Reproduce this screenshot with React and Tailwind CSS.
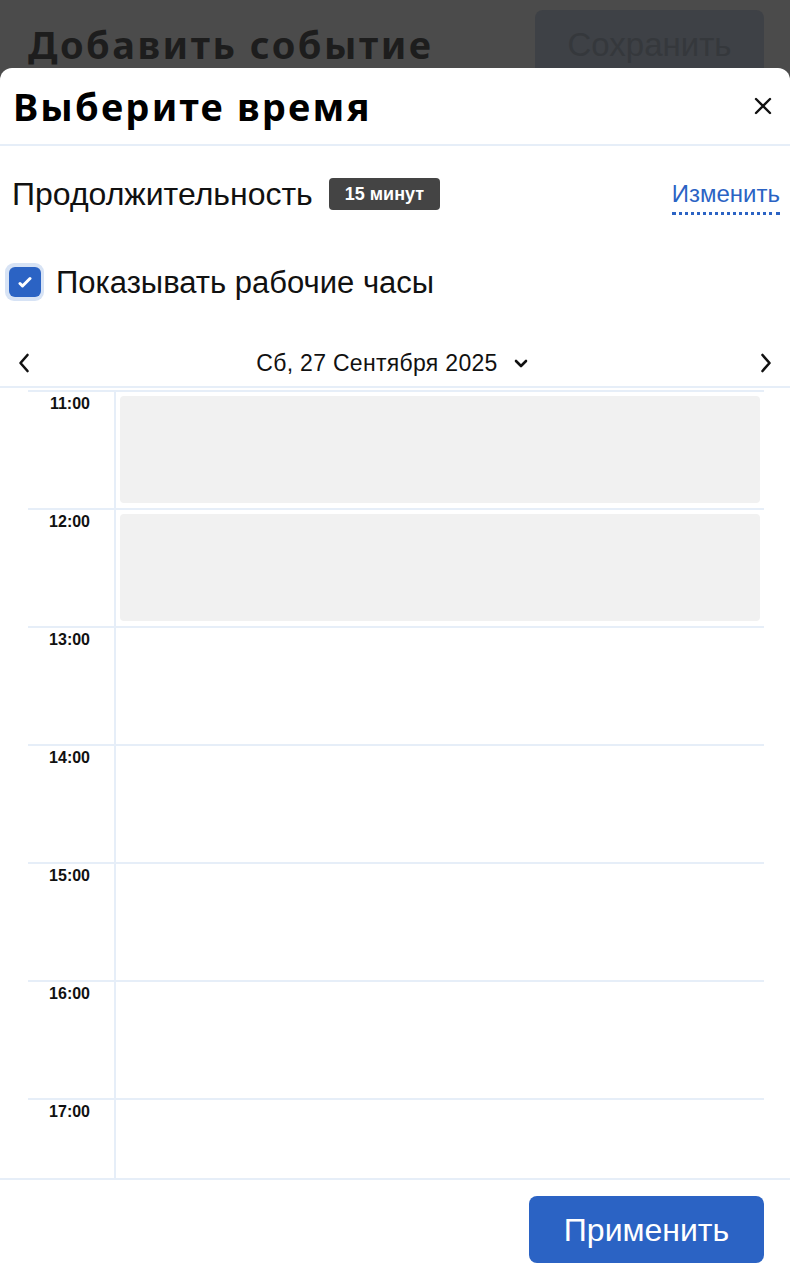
import React from 'react';

const hours = [
  { label: '11:00', busy: true },
  { label: '12:00', busy: true },
  { label: '13:00', busy: false },
  { label: '14:00', busy: false },
  { label: '15:00', busy: false },
  { label: '16:00', busy: false },
  { label: '17:00', busy: false },
];

const sans = "font-['Liberation_Sans',Arial,sans-serif]";

const App = () => {
  return (
    <div className={`relative h-[1272px] w-[790px] overflow-hidden bg-[#4b4b4b] ${sans}`}>
      {/* page behind the overlay */}
      <div className="flex items-start justify-between pl-[28px] pr-[26px] pt-[10px]">
        <h1 className="pt-[12px] font-['Noto_Sans',sans-serif] text-[38px] font-bold leading-[44px] tracking-[2.5px] text-[#1d1d1d]">
          Добавить событие
        </h1>
        <button className="h-[70px] w-[229px] rounded-[8px] bg-[#3e4146] text-[33px] text-[#35383c]">
          Сохранить
        </button>
      </div>

      {/* sheet */}
      <div className="absolute inset-x-0 top-[68px] bottom-0 flex flex-col rounded-t-[12px] bg-white">
        <div className="flex h-[78px] shrink-0 items-center justify-between border-b-2 border-[#e6eef8] pl-[13px] pr-[18px]">
          <h2 className="font-['Noto_Sans',sans-serif] text-[38px] font-bold leading-none tracking-[2.2px] text-black">
            Выберите время
          </h2>
          <svg width="18" height="18" viewBox="0 0 18 18" fill="none" stroke="#111" strokeWidth="2.4" strokeLinecap="round">
            <path d="M2 2L16 16M16 2L2 16" />
          </svg>
        </div>

        <div className="flex h-[32px] items-center justify-between mt-[32px] pl-[12px] pr-[10px]">
          <div className="flex items-center gap-[16px]">
            <span className="text-[32px] leading-none text-[#111]">Продолжительность</span>
            <span className="flex h-[32px] items-center rounded-[4px] bg-[#444] px-[16px] text-[18px] font-bold text-white">
              15 минут
            </span>
          </div>
          <button className="mt-[6px] border-b-[3px] border-dotted border-[#2b63c4] pb-[4px] text-[24px] leading-[28px] text-[#2b63c4]">
            Изменить
          </button>
        </div>

        <label className="mt-[54px] flex h-[36px] items-center gap-[12px] pl-[5px]">
          <span className="flex h-[38px] w-[39px] items-center justify-center rounded-[9px] bg-[#d7e3f5]">
            <span className="flex h-[30px] w-[32px] items-center justify-center rounded-[6px] bg-[#2b63c4]">
              <svg width="14" height="12" viewBox="0 0 14 12" fill="none" stroke="white" strokeWidth="3" strokeLinecap="round" strokeLinejoin="round">
                <path d="M2 7.5L4.5 10L12 2.5" />
              </svg>
            </span>
          </span>
          <span className="text-[31px] leading-none text-[#111]">Показывать рабочие часы</span>
        </label>

        <div className="mt-[40px] flex h-[46px] items-center justify-between px-[18px]">
          <svg width="12" height="20" viewBox="0 0 12 20" fill="none" stroke="#111" strokeWidth="2.6" strokeLinecap="round" strokeLinejoin="round">
            <path d="M9.5 2L2.5 10L9.5 18" />
          </svg>
          <div className="mr-[6px] flex items-center gap-[16px]">
            <span className="text-[23px] leading-none tracking-[0.3px] text-[#111]">Сб, 27 Сентября 2025</span>
            <svg width="14" height="9" viewBox="0 0 14 9" fill="none" stroke="#111" strokeWidth="2.6" strokeLinecap="round" strokeLinejoin="round">
              <path d="M2 2L7 7L12 2" />
            </svg>
          </div>
          <svg width="12" height="20" viewBox="0 0 12 20" fill="none" stroke="#111" strokeWidth="2.6" strokeLinecap="round" strokeLinejoin="round">
            <path d="M2.5 2L9.5 10L2.5 18" />
          </svg>
        </div>

        {/* day grid */}
        <div className="h-[792px] shrink-0 overflow-hidden border-t-2 border-[#e6eef8] pt-[2px]">
          <div className="ml-[28px] w-[736px]">
            {hours.map((h) => (
              <div key={h.label} className="flex h-[118px] border-t-2 border-[#e6eef8]">
                <div className="w-[86px] shrink-0 pr-[24px] pt-[3px] text-right text-[16px] font-bold leading-[18px] text-[#111]">
                  {h.label}
                </div>
                <div className="flex-1 border-l-2 border-[#e6eef8] px-[4px] pt-[4px]">
                  {h.busy && <div className="h-[107px] rounded-[4px] bg-[#f1f1f1]" />}
                </div>
              </div>
            ))}
          </div>
        </div>

        <div className="flex justify-end border-t-2 border-[#e6eef8] pr-[26px] pt-[16px]">
          <button className="h-[67px] w-[235px] rounded-[8px] bg-[#2b63c4] text-[32px] text-white">
            Применить
          </button>
        </div>
      </div>
    </div>
  );
};

export default App;
